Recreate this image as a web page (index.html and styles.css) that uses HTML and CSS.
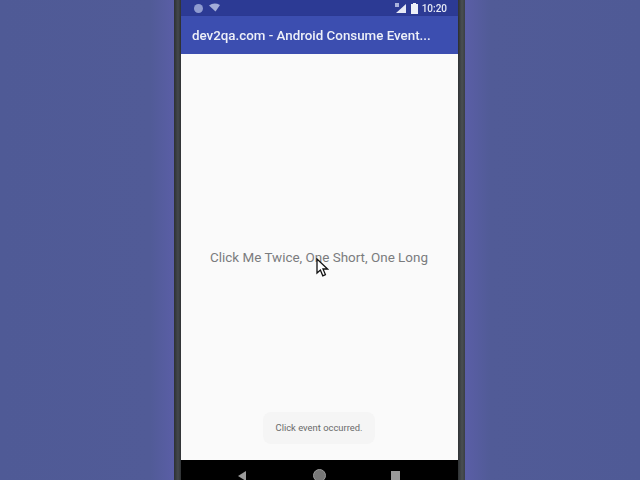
FILE: index.html
```html
<!DOCTYPE html>
<html lang="en">
<head>
    <meta charset="UTF-8">
    <title>dev2qa.com - Android Consume Event</title>
    <link rel="stylesheet" href="styles.css">
</head>
<body>
    <div class="phone">
        <div class="screen">
            <div class="status-bar">
                <div class="status-left">
                    <span class="status-dot"></span>
                    <svg class="status-wifi" width="12" height="10" viewBox="0 0 12 10">
                        <path d="M0 2.5 Q5 -1 11 2 L6.5 8.5 Z" fill="#a3add9"/>
                    </svg>
                </div>
                <div class="status-right">
                    <svg width="13" height="11" viewBox="0 0 13 11">
                        <path d="M12 1 V10 H2 Z" fill="#e6e9f5"/>
                        <path d="M1 0 H5 V4 H1 Z" fill="#aab3dc"/>
                    </svg>
                    <svg width="7" height="11" viewBox="0 0 7 11">
                        <path d="M2 0 H5 V1 H7 V11 H0 V1 H2 Z" fill="#eef0f8"/>
                    </svg>
                    <span class="status-time">10:20</span>
                </div>
            </div>
            <div class="app-bar">dev2qa.com - Android Consume Event...</div>
            <div class="content">
                <div class="click-text">Click Me Twice, One Short, One Long</div>
                <svg class="cursor" width="13" height="19" viewBox="0 0 13 19">
                    <path d="M1 1 V15 L4.4 12 L6.8 17.8 L9.4 16.6 L7 11 H11.6 Z" fill="#fff" stroke="#111" stroke-width="1.3"/>
                </svg>
                <div class="toast">Click event occurred.</div>
            </div>
            <div class="nav-bar">
                <span class="nav-back"></span>
                <span class="nav-home"></span>
                <span class="nav-recent"></span>
            </div>
        </div>
    </div>
</body>
</html>
```

FILE: styles.css
```css
/* Base Styles */
html, body {
    margin: 0;
    padding: 0;
    height: 480px;
    overflow: hidden;
}

body {
    font-family: 'Roboto', 'Liberation Sans', sans-serif;
    background: linear-gradient(90deg, #4f5a96 0, #515b97 150px, #5a5ea6 174px, #5a5ea6 466px, #515b97 490px, #4f5a96 100%);
    display: flex;
    justify-content: center;
}

/* Phone */
.phone {
    width: 277px;
    height: 480px;
    margin-left: -1px;
    padding: 0 7px;
    background: linear-gradient(90deg, #2c3032 0, #44484c 4px, #2f3234 7px, #2f3234 284px, #4a4f52 288px, #3a3e44 291px);
}

.screen {
    height: 480px;
    display: flex;
    flex-direction: column;
    filter: blur(0.4px);
}

/* Status Bar */
.status-bar {
    height: 16px;
    flex: none;
    background-color: #2c3a94;
    display: flex;
    justify-content: space-between;
    align-items: center;
    padding: 0 11px 0 13px;
}

.status-left, .status-right {
    display: flex;
    align-items: center;
}

.status-left {
    gap: 6px;
}

.status-right {
    gap: 4px;
}

.status-dot {
    width: 9px;
    height: 9px;
    border-radius: 50%;
    background-color: #8f9bd0;
}

.status-time {
    font-size: 10px;
    font-weight: 500;
    color: #e6e9f5;
}

/* App Bar */
.app-bar {
    height: 38px;
    flex: none;
    position: relative;
    background-color: #3c4eb0;
    box-shadow: 0 1px 2px rgba(0, 0, 0, 0.2);
    box-sizing: border-box;
    padding: 1px 0 0 11px;
    display: flex;
    align-items: center;
    color: #eef0f8;
    font-size: 13.35px;
    font-weight: 500;
    white-space: nowrap;
}

/* Content */
.content {
    flex: 1;
    position: relative;
    background-color: #fafafa;
    display: flex;
    flex-direction: column;
    align-items: center;
}

.click-text {
    margin-top: 196px;
    margin-left: -1px;
    color: #7a7c7e;
    font-size: 13.45px;
    line-height: 16px;
}

.cursor {
    position: absolute;
    left: 135px;
    top: 204px;
}

.toast {
    margin-top: 146px;
    margin-left: -1px;
    padding: 0 13px;
    height: 32px;
    line-height: 32px;
    border-radius: 8px;
    background-color: #f5f5f5;
    color: #6a6a6a;
    font-size: 9.4px;
}

/* Navigation Bar */
.nav-bar {
    height: 20px;
    flex: none;
    background-color: #000;
    display: flex;
    justify-content: center;
    gap: 65px;
    padding: 9px 2px 0 0;
    box-sizing: border-box;
    overflow: hidden;
}

.nav-back {
    width: 0;
    height: 0;
    margin: 2px 2px 0 0;
    border-top: 5px solid transparent;
    border-bottom: 5px solid transparent;
    border-right: 8px solid #9a9a9a;
}

.nav-home {
    width: 11px;
    height: 11px;
    border: 1px solid #9a9a9a;
    background-color: #777;
    border-radius: 50%;
}

.nav-recent {
    width: 9px;
    height: 10px;
    margin-top: 2px;
    background-color: #9a9a9a;
}
```
